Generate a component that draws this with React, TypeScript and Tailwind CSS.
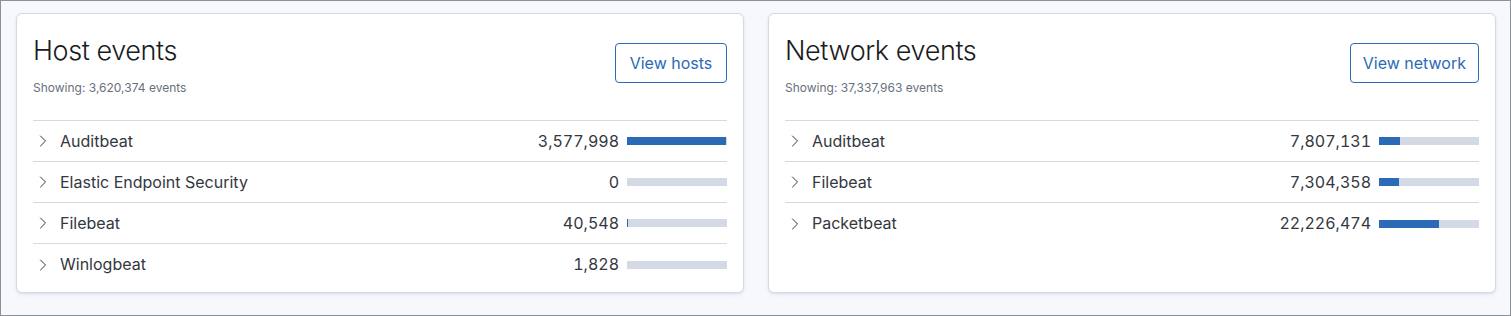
import { ChevronRight } from "lucide-react";

type Row = { label: string; count: number };

const fmt = (n: number) => n.toLocaleString("en-US");

const EventsCard = ({
  title,
  total,
  button,
  rows,
}: {
  title: string;
  total: number;
  button: string;
  rows: Row[];
}) => (
  <section className="min-w-0 flex-1 basis-0 rounded-md border border-[#d3dae6] bg-white px-4 pt-4 pb-2 shadow-[0_1px_2px_rgba(0,0,0,0.06),0_2px_4px_rgba(152,162,179,0.15)]">
    <div className="flex items-start justify-between">
      <div>
        <h2 className="mt-[3px] text-[27px] font-light leading-[36px] tracking-[-0.015em] text-[#1a1c21]">
          {title}
        </h2>
        <p className="mt-[11px] text-[12px] leading-[16px] text-[#69707d]">Showing: {fmt(total)} events</p>
      </div>
      <button className="mt-[13px] h-10 min-w-[112px] rounded-[4px] border border-[#2b6ab4] px-3 text-[16px] text-[#2b6ab4]">
        {button}
      </button>
    </div>
    <ul className="mt-[24px] border-t border-[#d3dae6]">
      {rows.map((r, i) => (
        <li
          key={r.label}
          className={`flex h-[41px] items-center ${i < rows.length - 1 ? "border-b border-[#d3dae6]" : ""}`}
        >
          <ChevronRight className="h-[20px] w-[20px] text-[#343741]" strokeWidth={1.2} />
          <span className="ml-[7px] -mt-px flex-1 text-[16px] text-[#343741]">{r.label}</span>
          <span className="-mt-px text-[16px] tabular-nums text-[#343741]">{fmt(r.count)}</span>
          <div className="ml-[8px] h-[8px] w-[100px] bg-[#d3dae6]">
            <div className="h-full bg-[#2b6ab4]" style={{ width: `${(r.count / total) * 100}%` }} />
          </div>
        </li>
      ))}
    </ul>
  </section>
);

export default function App() {
  return (
    <div className="h-[316px] w-[1511px] border border-[#8a9199] bg-[#f7f8fc] font-['Inter',sans-serif]">
      <div className="flex h-[292px] items-stretch gap-[24px] pl-[15px] pr-[14px] pt-[12px]">
        <EventsCard
          title="Host events"
          total={3620374}
          button="View hosts"
          rows={[
            { label: "Auditbeat", count: 3577998 },
            { label: "Elastic Endpoint Security", count: 0 },
            { label: "Filebeat", count: 40548 },
            { label: "Winlogbeat", count: 1828 },
          ]}
        />
        <EventsCard
          title="Network events"
          total={37337963}
          button="View network"
          rows={[
            { label: "Auditbeat", count: 7807131 },
            { label: "Filebeat", count: 7304358 },
            { label: "Packetbeat", count: 22226474 },
          ]}
        />
      </div>
    </div>
  );
}
